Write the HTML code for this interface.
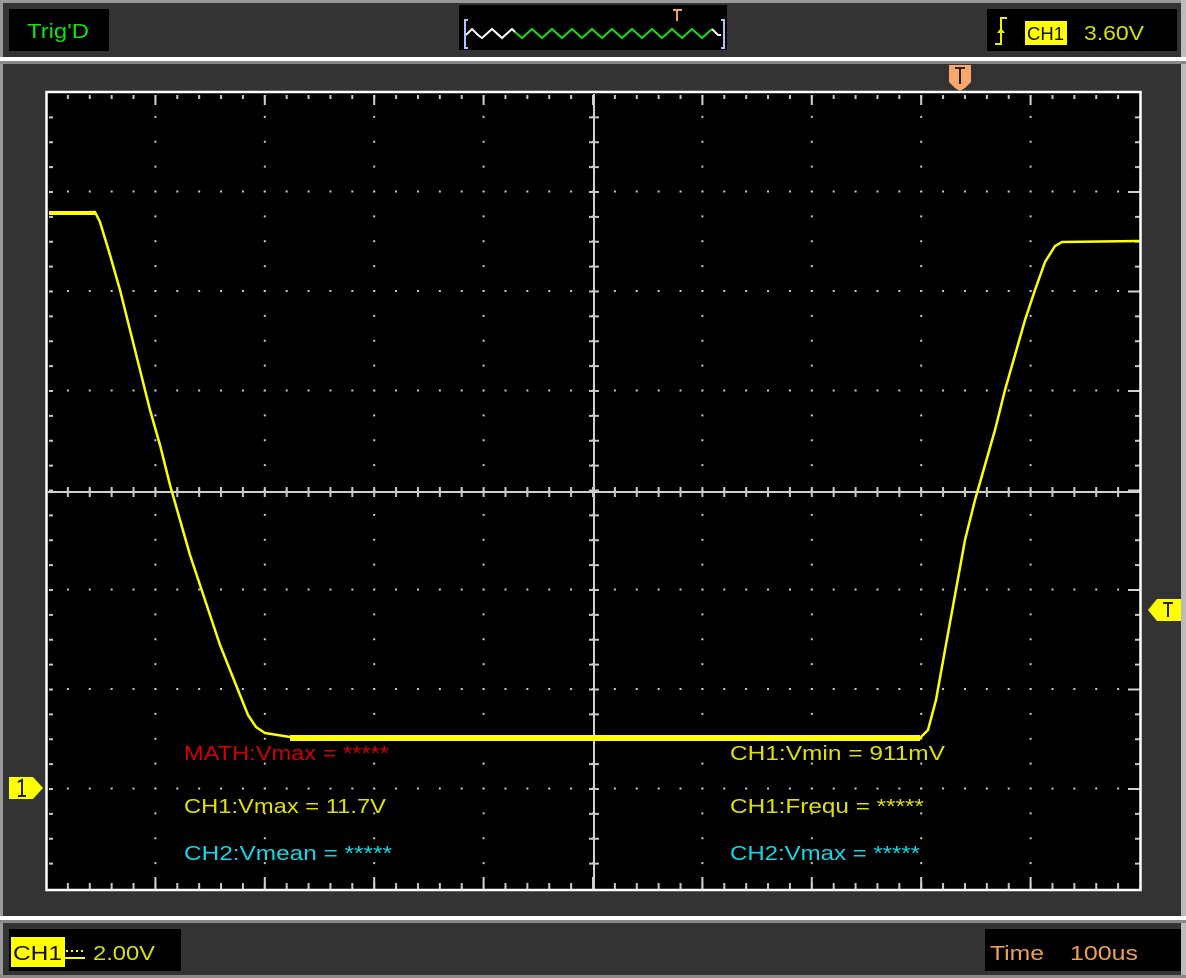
<!DOCTYPE html>
<html><head><meta charset="utf-8"><style>
html,body{margin:0;padding:0;background:#333;}
svg{display:block;}
text{font-family:"Liberation Sans",sans-serif;}
</style></head><body>
<svg width="1186" height="978" xmlns="http://www.w3.org/2000/svg">
<defs>
<pattern id="dh" patternUnits="userSpaceOnUse" x="46" y="92" width="21.88" height="99.5"><rect x="-1" y="-1" width="2" height="2" fill="#c8c8c8"/><rect x="20.88" y="-1" width="2" height="2" fill="#c8c8c8"/><rect x="-1" y="98.5" width="2" height="2" fill="#c8c8c8"/><rect x="20.88" y="98.5" width="2" height="2" fill="#c8c8c8"/></pattern>
<pattern id="dv" patternUnits="userSpaceOnUse" x="46" y="92" width="109.4" height="24.875"><rect x="-1" y="-1" width="2" height="2" fill="#c8c8c8"/><rect x="108.4" y="-1" width="2" height="2" fill="#c8c8c8"/><rect x="-1" y="23.875" width="2" height="2" fill="#c8c8c8"/><rect x="108.4" y="23.875" width="2" height="2" fill="#c8c8c8"/></pattern>
<pattern id="tx" patternUnits="userSpaceOnUse" x="45" y="0" width="21.88" height="10"><rect x="0" y="0" width="2" height="10" fill="#c8c8c8"/></pattern>
<pattern id="ty" patternUnits="userSpaceOnUse" x="0" y="91.5" width="10" height="24.875"><rect x="0" y="0" width="10" height="2" fill="#c8c8c8"/></pattern>
<pattern id="txm" patternUnits="userSpaceOnUse" x="45" y="0" width="109.4" height="12"><rect x="0" y="0" width="2" height="12" fill="#d0d0d0"/></pattern>
<pattern id="tym" patternUnits="userSpaceOnUse" x="0" y="91.5" width="12" height="99.5"><rect x="0" y="0" width="12" height="2" fill="#d0d0d0"/></pattern>
</defs>
<rect x="0" y="0" width="1186" height="978" fill="#333"/>
<rect x="0" y="0" width="1186" height="3" fill="#999"/>
<rect x="0" y="3" width="3" height="975" fill="#999"/>
<rect x="1181" y="0" width="5" height="978" fill="#bbb"/>
<rect x="0" y="57" width="1186" height="4" fill="#fff"/>
<rect x="0" y="61" width="1186" height="3" fill="#888"/>
<rect x="0" y="916" width="1186" height="4" fill="#fff"/>
<rect x="0" y="920" width="1186" height="3" fill="#888"/>
<rect x="0" y="975" width="1186" height="3" fill="#888"/>

<rect x="9" y="9" width="100" height="42" fill="#000"/>
<text x="27" y="38" font-size="20" fill="#10e010" textLength="62" lengthAdjust="spacingAndGlyphs">Trig'D</text>
<rect x="459" y="5" width="268" height="45" fill="#000"/>
<path d="M468 20h-3v28h3M721 20h3v28h-3" stroke="#b0c0ff" stroke-width="2" fill="none"/>
<polyline points="466,35 472,29 478,35 482,38 492,29 502,38 512,29 515,32" stroke="#fff" stroke-width="2" fill="none"/>
<polyline points="515,32 522,38 532,29 542,38 552,29 562,38 572,29 582,38 592,29 602,38 612,29 622,38 632,29 642,38 652,29 662,38 672,29 682,38 692,29 702,38 712,29" stroke="#10e010" stroke-width="2" fill="none"/>
<polyline points="712,29 718,35 721,35" stroke="#fff" stroke-width="2" fill="none"/>
<path d="M673 10h9M677 10v11" stroke="#f0a060" stroke-width="2"/>
<rect x="987" y="9" width="190" height="42" fill="#000"/>
<path d="M995 44h6v-26h6" stroke="#f0f000" stroke-width="2" fill="none"/>
<path d="M997 33l4-5 4 5z" fill="#f0f000"/>
<rect x="1025" y="21" width="42" height="24" fill="#ffff00"/>
<text x="1027" y="40" font-size="18" fill="#111" textLength="37" lengthAdjust="spacingAndGlyphs">CH1</text>
<text x="1084" y="40" font-size="20" fill="#d8e000" textLength="60" lengthAdjust="spacingAndGlyphs">3.60V</text>

<rect x="46" y="92" width="1094" height="798" fill="#000"/>
<rect x="46" y="92" width="1094" height="798" fill="url(#dh)"/>
<rect x="46" y="92" width="1094" height="798" fill="url(#dv)"/>
<rect x="49" y="95" width="1090" height="4" fill="url(#tx)"/>
<rect x="49" y="95" width="1090" height="10" fill="url(#txm)"/>
<rect x="49" y="883" width="1090" height="4" fill="url(#tx)"/>
<rect x="49" y="877" width="1090" height="10" fill="url(#txm)"/>
<rect x="49" y="95" width="4" height="792" fill="url(#ty)"/>
<rect x="1135" y="95" width="4" height="792" fill="url(#ty)"/>
<rect x="1128" y="95" width="11" height="792" fill="url(#tym)"/>
<rect x="48" y="491" width="1092" height="2" fill="#d0d0d0"/>
<rect x="593" y="94" width="2" height="795" fill="#d0d0d0"/>
<rect x="49" y="487" width="1090" height="10" fill="url(#tx)"/>
<rect x="589" y="95" width="10" height="792" fill="url(#ty)"/>
<rect x="46" y="92" width="1094" height="798" fill="none" stroke="#fff" stroke-width="2.5" transform="translate(0.5,0)"/>

<polyline points="49,213 95,212 100,222 110,255 120,290 130,330 140,370 150,410 160,445 170,485 180,520 190,555 200,585 210,615 220,645 230,670 240,695 248,715 256,727 265,733 290,737 920,738 928,730 936,700 945,650 955,595 965,540 975,500 985,465 995,430 1005,390 1015,355 1025,320 1035,290 1045,262 1055,246 1062,242 1139,241" stroke="#ffff00" stroke-width="2.5" fill="none"/>
<rect x="290" y="735" width="630" height="6" fill="#ffff00"/>
<rect x="49" y="211" width="46" height="4" fill="#ffff00"/>

<g font-size="20" lengthAdjust="spacingAndGlyphs">
<text x="184" y="760" fill="#d00000" textLength="205" lengthAdjust="spacingAndGlyphs">MATH:Vmax = *****</text>
<text x="184" y="813" fill="#e0e000" textLength="202" lengthAdjust="spacingAndGlyphs">CH1:Vmax = 11.7V</text>
<text x="184" y="860" fill="#10d8e8" textLength="208" lengthAdjust="spacingAndGlyphs">CH2:Vmean = *****</text>
<text x="730" y="760" fill="#e0e000" textLength="215" lengthAdjust="spacingAndGlyphs">CH1:Vmin = 911mV</text>
<text x="730" y="813" fill="#e0e000" textLength="194" lengthAdjust="spacingAndGlyphs">CH1:Frequ = *****</text>
<text x="730" y="860" fill="#10d8e8" textLength="190" lengthAdjust="spacingAndGlyphs">CH2:Vmax = *****</text>
</g>

<path d="M949 65h22v17l-6 6l-5 3l-5-3l-6-6z" fill="#f8a868"/>
<path d="M955 68h10M960 68v16" stroke="#222" stroke-width="2"/>
<path d="M1181 599h-24l-9 11l9 11h24z" fill="#ffff00"/>
<path d="M1163 603h10M1168 603v14" stroke="#222" stroke-width="2"/>
<path d="M9 777h24l10 11l-10 11h-24z" fill="#ffff00"/>
<path d="M18 782l4-2v16M18 796h8" stroke="#222" stroke-width="2" fill="none"/>

<rect x="9" y="929" width="172" height="42" fill="#000"/>
<rect x="11" y="937" width="54" height="30" fill="#ffff00"/>
<text x="13" y="960" font-size="20" fill="#111" textLength="49" lengthAdjust="spacingAndGlyphs">CH1</text>
<path d="M66 951h20" stroke="#ffff00" stroke-width="2" stroke-dasharray="2 3"/>
<path d="M65 958h20" stroke="#ffff00" stroke-width="2"/>
<text x="93" y="960" font-size="20" fill="#d8e000" textLength="62" lengthAdjust="spacingAndGlyphs">2.00V</text>
<rect x="985" y="929" width="196" height="42" fill="#000"/>
<text x="990" y="960" font-size="20" fill="#f0a050" textLength="54" lengthAdjust="spacingAndGlyphs">Time</text>
<text x="1070" y="960" font-size="20" fill="#f0a050" textLength="68" lengthAdjust="spacingAndGlyphs">100us</text>
</svg>
</body></html>
